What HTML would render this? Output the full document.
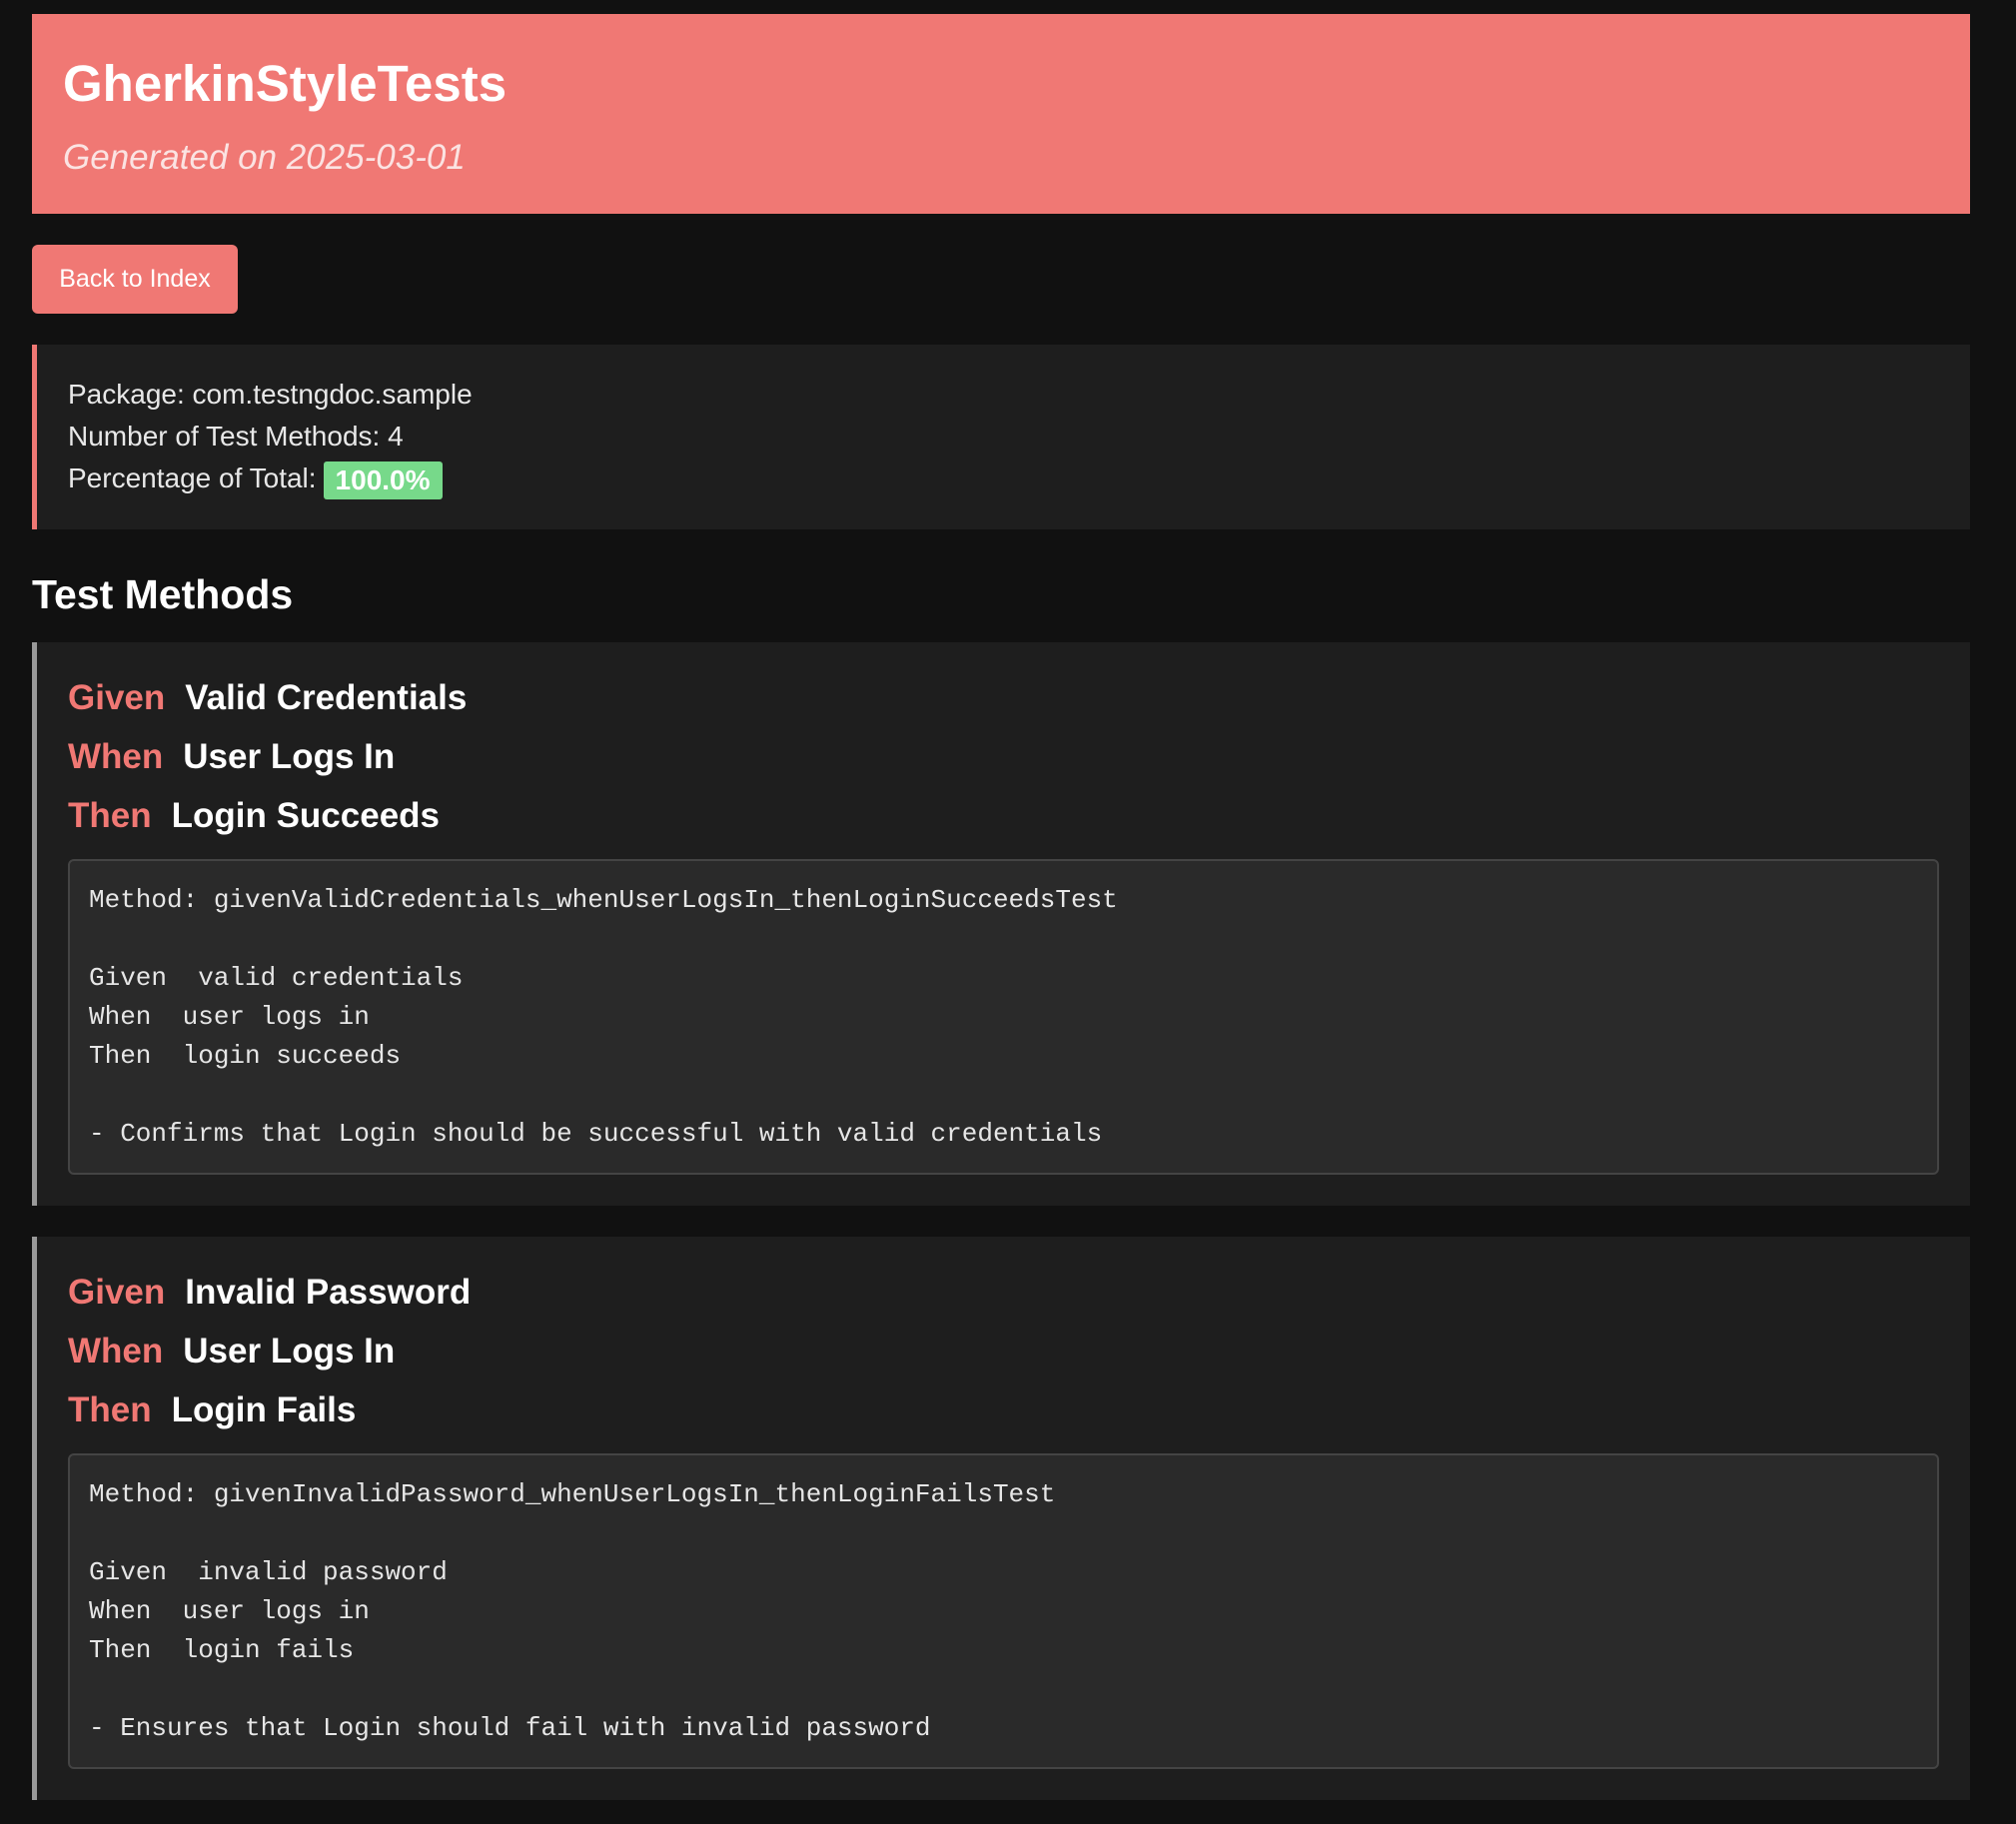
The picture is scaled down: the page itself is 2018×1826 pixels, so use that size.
<!DOCTYPE html>
<html><head><meta charset="utf-8"><style>
*{box-sizing:border-box;margin:0;padding:0}
body{width:2018px;height:1826px;background:#111;font-family:"Liberation Sans",Arial,sans-serif;color:#eee;position:relative;overflow:hidden}
.hdr{position:absolute;left:32px;top:14px;width:1940px;height:200px;background:#f07874}
.hdr h1{position:absolute;left:31px;top:40px;font-size:51px;font-weight:bold;color:#fff}
.hdr p{position:absolute;left:31px;top:124px;font-size:35px;font-style:italic;color:#fbe3e2}
.btn{position:absolute;left:32px;top:245px;width:206px;height:69px;background:#f07874;border-radius:6px;color:#fff;font-size:25px;line-height:69px;text-align:center}
.info{position:absolute;left:32px;top:345px;width:1940px;height:185px;background:#1e1e1e;border-left:5px solid #f07874;padding:29px 0 0 31px;font-size:28px;line-height:42px;color:#e8e8e8}
.badge{display:inline-block;background:#77d98a;color:#fff;font-weight:bold;border-radius:3px;padding:0 12px;line-height:38px;height:38px;vertical-align:middle;margin-left:7px}
h2{position:absolute;left:32px;top:572px;font-size:41px;font-weight:bold;color:#fff}
.card{position:absolute;left:32px;width:1940px;height:564px;background:#1e1e1e;border-left:5px solid #9a9a9a;padding:26px 31px 0 31px}
.g{font-size:35px;font-weight:bold;color:#fff;height:59px;line-height:59px}
.g b{color:#f07874;margin-right:20px}
pre{margin-top:14px;background:#2a2a2a;border:2px solid #444;border-radius:6px;height:316px;padding:20px 19px;font-family:"Liberation Mono","DejaVu Sans Mono",monospace;font-size:26px;line-height:39px;color:#e6e6e6;white-space:pre}
</style></head><body>
<div class="hdr"><h1>GherkinStyleTests</h1><p>Generated on 2025-03-01</p></div>
<div class="btn">Back to Index</div>
<div class="info">Package: com.testngdoc.sample<br>Number of Test Methods: 4<br>Percentage of Total:<span class="badge">100.0%</span></div>
<h2>Test Methods</h2>
<div class="card" style="top:643px">
<div class="g"><b>Given</b>Valid Credentials</div>
<div class="g"><b>When</b>User Logs In</div>
<div class="g"><b>Then</b>Login Succeeds</div>
<pre>Method: givenValidCredentials_whenUserLogsIn_thenLoginSucceedsTest

Given  valid credentials
When  user logs in
Then  login succeeds

- Confirms that Login should be successful with valid credentials</pre>
</div>
<div class="card" style="top:1238px">
<div class="g"><b>Given</b>Invalid Password</div>
<div class="g"><b>When</b>User Logs In</div>
<div class="g"><b>Then</b>Login Fails</div>
<pre>Method: givenInvalidPassword_whenUserLogsIn_thenLoginFailsTest

Given  invalid password
When  user logs in
Then  login fails

- Ensures that Login should fail with invalid password</pre>
</div>
</body></html>
